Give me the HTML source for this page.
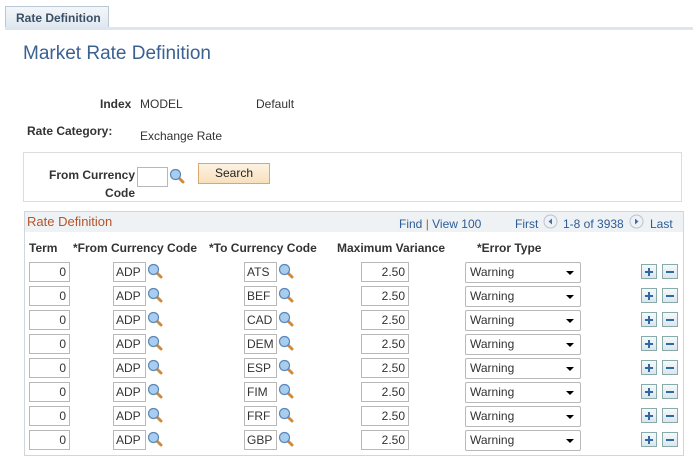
<!DOCTYPE html>
<html><head><meta charset="utf-8"><style>
*{margin:0;padding:0;box-sizing:border-box}
body{width:693px;height:463px;background:#fff;position:relative;overflow:hidden;font-family:"Liberation Sans",Arial,sans-serif;font-size:12px;color:#333}
.a{position:absolute;white-space:nowrap}
.b{font-weight:bold;color:#333}
.in{position:absolute;height:20px;border:1px solid #b8b8b8;background:#fff;font-size:12px;line-height:18px;padding:0 3px;color:#333}
.r{text-align:right}
.sel{position:absolute;height:21px;width:116px;border:1px solid #b8b8b8;border-radius:2px;background:#fff;line-height:19px;padding-left:4px;color:#333;font-size:12px}
.sel:after{content:"";position:absolute;right:6px;top:8px;border-left:4px solid transparent;border-right:4px solid transparent;border-top:4px solid #000}
.mg{position:absolute;width:16px;height:16px}
.btn{position:absolute;width:16px;height:15px;border:1px solid #8aa;background:linear-gradient(#f5f9fb,#dbe6ec)}
.btn i{position:absolute;background:#2e6aa6}
</style></head><body>
<div class="a" style="left:5px;top:6px;width:104px;height:23px;border:1px solid #b9c7d6;border-bottom:none;background:linear-gradient(#f4f7fa,#dde6ef)"></div>
<div class="a b" style="left:16px;top:11px;font-size:12px;color:#3a4f66">Rate Definition</div>
<div class="a" style="left:5px;top:27px;width:688px;height:3px;background:#dde6ef"></div>
<div class="a" style="left:23px;top:43px;font-size:19px;color:#3b6191">Market Rate Definition</div>
<div class="a b" style="left:100px;top:97px">Index</div>
<div class="a" style="left:140px;top:97px">MODEL</div>
<div class="a" style="left:256px;top:97px">Default</div>
<div class="a b" style="left:27px;top:124px">Rate Category:</div>
<div class="a" style="left:140px;top:129px">Exchange Rate</div>
<div class="a" style="left:23px;top:152px;width:659px;height:50px;border:1px solid #dcdcdc"></div>
<div class="a b" style="left:49px;top:166px;text-align:right;line-height:18px">From Currency<br><span style="padding-left:54px">Code</span></div>
<div class="in" style="left:137px;top:167px;width:31px"></div>
<svg class="mg" style="left:169px;top:168px" viewBox="0 0 16 16"><line x1="9" y1="9" x2="14" y2="14" stroke="#d08a3c" stroke-width="3" stroke-linecap="round"/><circle cx="6.5" cy="6.5" r="5" fill="#a9cdee" stroke="#5a88b8" stroke-width="1.2"/></svg>
<div class="a" style="left:198px;top:163px;width:72px;height:21px;border:1px solid #d8a870;background:linear-gradient(#fdf3e3,#f8e0bc);text-align:center;line-height:19px;color:#222">Search</div>
<div class="a" style="left:24px;top:211px;width:660px;height:245px;border:1px solid #cfd6dc"></div>
<div class="a" style="left:25px;top:212px;width:658px;height:20px;background:#eef2f4"></div>
<div class="a" style="left:27px;top:214px;color:#b5552a;font-size:13px">Rate Definition</div>
<div class="a" style="left:399px;top:217px;color:#2e5c96">Find <span style="color:#b5552a">|</span> View 100</div>
<div class="a" style="left:515px;top:217px;color:#2e5c96">First</div>
<svg class="a" style="left:543px;top:214px" width="15" height="15"><circle cx="7.5" cy="7.5" r="6.5" fill="#eef2f6" stroke="#b8c4cf"/><path d="M9 4.5L5.5 7.5L9 10.5Z" fill="#4a6fa0"/></svg>
<div class="a" style="left:563px;top:217px;color:#2e5c96">1-8 of 3938</div>
<svg class="a" style="left:629px;top:214px" width="15" height="15"><circle cx="7.5" cy="7.5" r="6.5" fill="#eef2f6" stroke="#b8c4cf"/><path d="M6 4.5L9.5 7.5L6 10.5Z" fill="#4a6fa0"/></svg>
<div class="a" style="left:650px;top:217px;color:#2e5c96">Last</div>
<div class="a b" style="left:29px;top:241px">Term</div>
<div class="a b" style="left:73px;top:241px">*From Currency Code</div>
<div class="a b" style="left:209px;top:241px">*To Currency Code</div>
<div class="a b" style="left:337px;top:241px">Maximum Variance</div>
<div class="a b" style="left:477px;top:241px">*Error Type</div>
<div id="rows"></div>
<script>
var c=["ATS","BEF","CAD","DEM","ESP","FIM","FRF","GBP"],h="";
var mg='<svg viewBox="0 0 16 16" width="16" height="16"><line x1="9" y1="9" x2="14" y2="14" stroke="#d08a3c" stroke-width="3" stroke-linecap="round"/><circle cx="6.5" cy="6.5" r="5" fill="#a9cdee" stroke="#5a88b8" stroke-width="1.2"/></svg>';
for(var i=0;i<8;i++){var y=262+i*24;
h+='<div class="in r" style="left:29px;top:'+y+'px;width:41px">0</div>';
h+='<div class="in" style="left:113px;top:'+y+'px;width:33px;padding:0 2px">ADP</div>';
h+='<div class="mg" style="left:147px;top:'+(y+1)+'px">'+mg+'</div>';
h+='<div class="in" style="left:244px;top:'+y+'px;width:33px;padding:0 2px">'+c[i]+'</div>';
h+='<div class="mg" style="left:278px;top:'+(y+1)+'px">'+mg+'</div>';
h+='<div class="in r" style="left:361px;top:'+y+'px;width:48px">2.50</div>';
h+='<div class="sel" style="left:465px;top:'+y+'px">Warning</div>';
h+='<div class="btn" style="left:641px;top:'+(y+2)+'px"><i style="left:3px;top:6px;width:8px;height:2px"></i><i style="left:6px;top:3px;width:2px;height:8px"></i></div>';
h+='<div class="btn" style="left:662px;top:'+(y+2)+'px"><i style="left:3px;top:6px;width:8px;height:2px"></i></div>';}
document.getElementById("rows").innerHTML=h;
</script>
</body></html>
